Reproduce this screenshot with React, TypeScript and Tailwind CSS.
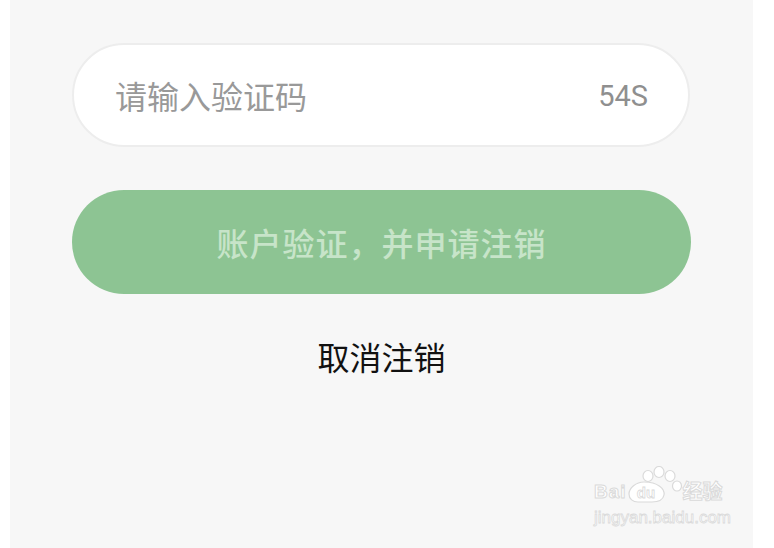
const CJK = "font-['Noto_Sans_CJK_SC',sans-serif]";

function BaiduMark() {
  return (
    <div className="flex flex-col items-start gap-[8px] select-none">
      <div className="flex items-end">
        <span className="font-['Liberation_Sans',sans-serif] text-[19px] leading-none font-bold tracking-[1px] text-white [-webkit-text-stroke:1px_#dadada]">
          Bai
        </span>
        <svg width="56" height="38" viewBox="0 0 56 38" className="-mb-[3px]">
          <g fill="#fff" stroke="#dadada" strokeWidth="1.2">
            <ellipse cx="21" cy="10" rx="5" ry="5.5" />
            <ellipse cx="32" cy="6" rx="5" ry="5.5" />
            <ellipse cx="43" cy="10" rx="5" ry="5.5" />
            <ellipse cx="50" cy="20" rx="4.5" ry="5" />
            <path d="M17 16c-8 0-15 6-15 12 0 5 4 8 9 8h14c6 0 11-2 12-7 1-6-6-13-20-13z" />
          </g>
          <text
            x="19"
            y="32"
            textAnchor="middle"
            fontFamily="Liberation Sans, sans-serif"
            fontSize="15"
            fontWeight="bold"
            fill="#fff"
            stroke="#dadada"
            strokeWidth="0.8"
          >
            du
          </text>
        </svg>
        <span className={`${CJK} text-[20px] leading-none font-bold text-white [-webkit-text-stroke:1px_#dadada]`}>
          经验
        </span>
      </div>
      <span className="font-['Liberation_Sans',sans-serif] text-[17px] leading-none text-white [-webkit-text-stroke:0.8px_#dadada]">
        jingyan.baidu.com
      </span>
    </div>
  );
}

export default function App() {
  return (
    <div className="flex h-[548px] w-[774px] bg-white">
      <div className="ml-[10px] flex w-[743px] flex-col bg-[#f7f7f7] pl-[62px]">
        <div className="mt-[43px] flex h-[104px] w-[618px] items-center justify-between rounded-full border-2 border-[#ededed] bg-white pr-[40px] pl-[41px]">
          <span className={`${CJK} text-[32px] leading-none text-[#999999]`}>
            请输入验证码
          </span>
          <span className="mt-[2px] font-['Roboto',sans-serif] text-[29px] leading-none text-[#8f8f8f]">
            54S
          </span>
        </div>
        <div className="mt-[43px] flex h-[104px] w-[619px] items-center justify-center rounded-full bg-[#8dc493]">
          <span className={`${CJK} text-[32px] leading-none font-medium tracking-[1px] text-[#c7e4c9]`}>
            账户验证，并申请注销
          </span>
        </div>
        <div className="mt-[46px] flex w-[619px] justify-center">
          <span className={`${CJK} text-[32px] leading-none text-[#111111]`}>
            取消注销
          </span>
        </div>
        <div className="mt-auto mb-[22px] flex justify-end pr-[22px]">
          <BaiduMark />
        </div>
      </div>
    </div>
  );
}
